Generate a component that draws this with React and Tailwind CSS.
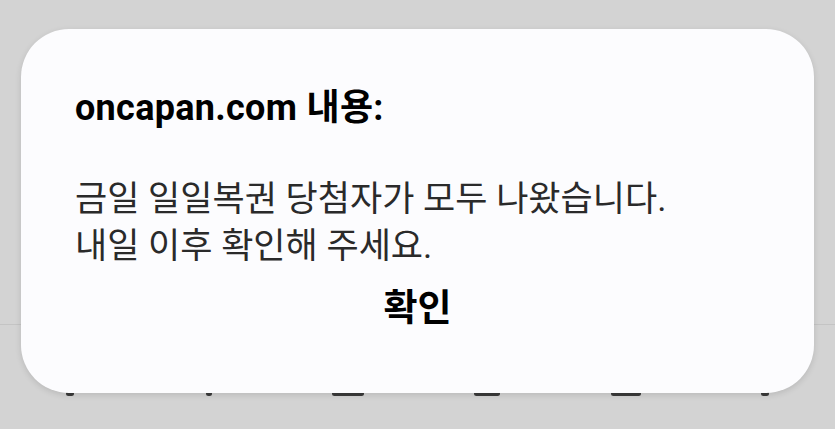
export default function App() {
  const navTops = [
    { w: "w-[8px]" },
    { w: "w-[6px]" },
    { w: "w-[32px]" },
    { w: "w-[26px]" },
    { w: "w-[30px]" },
    { w: "w-[8px]" },
  ];

  return (
    <div
      className="relative h-[429px] w-[835px] overflow-hidden bg-[#d3d3d3]"
      style={{ fontFamily: "Roboto, 'Noto Sans CJK KR', sans-serif" }}
    >
      {/* page behind the alert */}
      <div className="flex h-full flex-col">
        <div className="h-[325px] border-b border-[#c4c4c4]" />
        <div className="grid grid-cols-6 pt-[66px]">
          {navTops.map((n, i) => (
            <div key={i} className="flex justify-center">
              <div className={`${n.w} h-[5px] rounded-sm bg-[#3a3a3a]`} />
            </div>
          ))}
        </div>
      </div>

      {/* alert dialog */}
      <div className="absolute left-[21px] top-[29px] flex h-[364px] w-[793px] flex-col rounded-[48px] bg-[#fcfcfe] px-[54px] pt-[59px] shadow-[0_2px_6px_rgba(0,0,0,0.12)]">
        <h1 className="text-[36px] font-bold leading-[40px] tracking-[0.3px] text-black">oncapan.com 내용:</h1>
        <p className="mt-[48px] text-[35px] leading-[47px] text-[#2a2a2a]">
          금일 일일복권 당첨자가 모두 나왔습니다.
          <br />
          내일 이후 확인해 주세요.
        </p>
        <div className="mt-[18px] flex justify-center">
          <button className="text-[37px] font-bold leading-[42px] text-black">확인</button>
        </div>
      </div>
    </div>
  );
}
